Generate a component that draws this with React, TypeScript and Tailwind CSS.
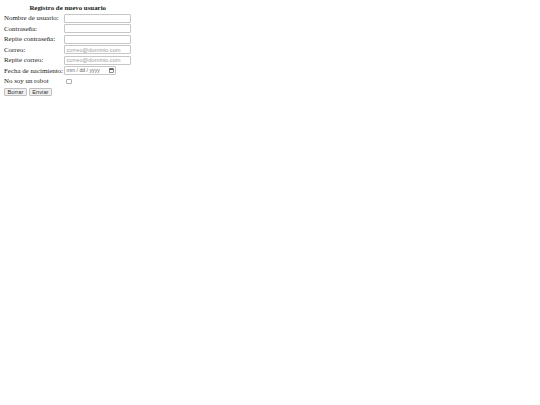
import React from 'react';

const fieldClass =
  "block h-[9px] w-[67px] rounded-[1px] border border-[#c6c6c6] bg-white px-[1px] font-['Liberation_Sans',sans-serif] text-[5.7px] text-black outline-none placeholder:text-[#a0a0a0]";

const btnClass =
  "h-[8px] rounded-[1px] border border-[#c0c0c0] bg-[#f0f0f0] px-[2.5px] font-['Liberation_Sans',sans-serif] text-[5.7px] leading-[6px] text-[#333]";

export default function App() {
  return (
    <div className="min-h-screen bg-white px-[4px] pt-[3.5px] font-['Liberation_Serif',serif] text-[6.9px] leading-[7.8px] text-[#1a1a1a]">
      <form onSubmit={(e) => e.preventDefault()}>
        <table className="border-collapse">
          <tbody>
            {/* Title */}
            <tr className="h-[9.5px]">
              <th colSpan={2} className="p-0 text-center align-middle font-bold">
                Registro de nuevo usuario
              </th>
            </tr>

            <tr className="h-[10.5px]">
              <td className="p-0 pr-[1px] align-middle">Nombre de usuario:</td>
              <td className="p-0 pl-[0.5px] align-middle">
                <input type="text" className={fieldClass} />
              </td>
            </tr>
            <tr className="h-[10.5px]">
              <td className="p-0 pr-[1px] align-middle">Contraseña:</td>
              <td className="p-0 pl-[0.5px] align-middle">
                <input type="password" className={fieldClass} />
              </td>
            </tr>
            <tr className="h-[10.5px]">
              <td className="p-0 pr-[1px] align-middle">Repite contraseña:</td>
              <td className="p-0 pl-[0.5px] align-middle">
                <input type="password" className={fieldClass} />
              </td>
            </tr>
            <tr className="h-[10.5px]">
              <td className="p-0 pr-[1px] align-middle">Correo:</td>
              <td className="p-0 pl-[0.5px] align-middle">
                <input type="email" placeholder="correo@dominio.com" className={fieldClass} />
              </td>
            </tr>
            <tr className="h-[10.5px]">
              <td className="p-0 pr-[1px] align-middle">Repite correo:</td>
              <td className="p-0 pl-[0.5px] align-middle">
                <input type="email" placeholder="correo@dominio.com" className={fieldClass} />
              </td>
            </tr>

            {/* Birth date */}
            <tr className="h-[10.5px]">
              <td className="p-0 pr-[1px] align-middle">Fecha de nacimiento:</td>
              <td className="p-0 pl-[0.5px] align-middle">
                <div className="flex h-[9px] w-[52px] items-center justify-between rounded-[1px] border border-[#c6c6c6] bg-white px-[1px] font-['Liberation_Sans',sans-serif] text-[5.2px] text-[#666]">
                  <span>mm / dd / yyyy</span>
                  <svg width="5" height="5" viewBox="0 0 10 10" className="mr-[0.5px]">
                    <rect x="1" y="1.5" width="8" height="7.5" fill="none" stroke="#444" strokeWidth="1.2" />
                    <rect x="1" y="1.5" width="8" height="2.2" fill="#444" />
                    <line x1="3" y1="0.3" x2="3" y2="2" stroke="#444" strokeWidth="1" />
                    <line x1="7" y1="0.3" x2="7" y2="2" stroke="#444" strokeWidth="1" />
                  </svg>
                </div>
              </td>
            </tr>

            {/* Robot check */}
            <tr className="h-[10.5px]">
              <td className="p-0 pr-[1px] align-middle">No soy un robot</td>
              <td className="p-0 pl-[0.5px] align-middle">
                <span className="ml-[2px] block h-[5.5px] w-[5.5px] rounded-[1px] border border-[#b0b0b0] bg-white" />
              </td>
            </tr>

            {/* Buttons */}
            <tr className="h-[10.5px]">
              <td className="p-0 align-middle">
                <div className="flex gap-[2px]">
                  <button type="reset" className={btnClass}>
                    Borrar
                  </button>
                  <button type="submit" className={btnClass}>
                    Enviar
                  </button>
                </div>
              </td>
              <td className="p-0" />
            </tr>
          </tbody>
        </table>
      </form>
    </div>
  );
}
